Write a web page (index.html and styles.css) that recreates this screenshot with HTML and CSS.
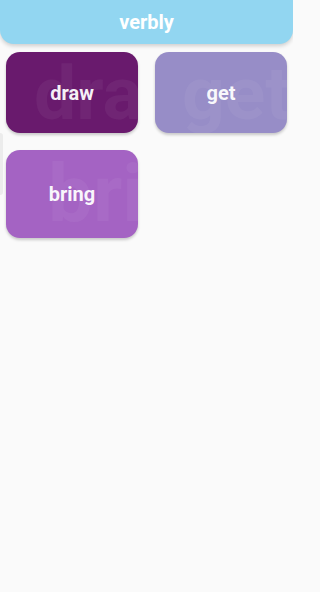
FILE: index.html
```html
<!DOCTYPE html>
<html>
<head>
<meta charset="utf-8">
<link rel="stylesheet" href="styles.css">
</head>
<body>
<header class="appbar"><h1 class="title">verbly</h1></header>
<main class="grid">
  <div class="col">
    <div class="card card--draw"><span class="ghost">draw</span><span class="label">draw</span></div>
    <div class="card card--bring"><span class="ghost">bring</span><span class="label">bring</span></div>
  </div>
  <div class="col">
    <div class="card card--get"><span class="ghost">get</span><span class="label">get</span></div>
  </div>
</main>
<div class="edge-glow"></div>
</body>
</html>
```
FILE: styles.css
```css
html, body {
  margin: 0;
  padding: 0;
  background: #fafafa;
  font-family: Roboto, "Liberation Sans", sans-serif;
}
body {
  width: 293px;
  height: 592px;
  overflow: hidden;
  position: relative;
}
.appbar {
  height: 44px;
  background: #92d6f1;
  border-radius: 0 0 14px 14px;
  box-shadow: 0 2px 4px rgba(0,0,0,0.18);
  display: flex;
  align-items: center;
  justify-content: center;
}
.title {
  margin: 0;
  color: #ffffff;
  font-size: 20px;
  font-weight: 700;
  line-height: 1;
}
.grid {
  display: flex;
  gap: 17px;
  padding: 8px 6px 0 6px;
}
.col {
  flex: 1;
  display: flex;
  flex-direction: column;
  gap: 17px;
}
.card {
  position: relative;
  overflow: hidden;
  border-radius: 14px;
  height: 81px;
  display: flex;
  align-items: center;
  justify-content: center;
  box-shadow: 0 2px 3px rgba(0,0,0,0.2);
}
.card--draw { background: #691a6d; }
.card--get { background: #978dc7; }
.card--bring { background: #a463c3; height: 88px; }
.label {
  position: relative;
  color: rgba(255,255,255,0.94);
  font-size: 20px;
  font-weight: 700;
}
.ghost {
  position: absolute;
  left: 28px;
  top: 4px;
  font-size: 75px;
  font-weight: 700;
  line-height: 1;
  color: rgba(255,255,255,0.05);
  white-space: nowrap;
}
.card--get .ghost { left: 27px; }
.card--bring .ghost { left: 42px; top: 4px; font-size: 80px; }
.edge-glow {
  position: absolute;
  left: 0;
  top: 133px;
  width: 3px;
  height: 62px;
  background: #ececec;
  border-radius: 0 3px 3px 0;
}
```
